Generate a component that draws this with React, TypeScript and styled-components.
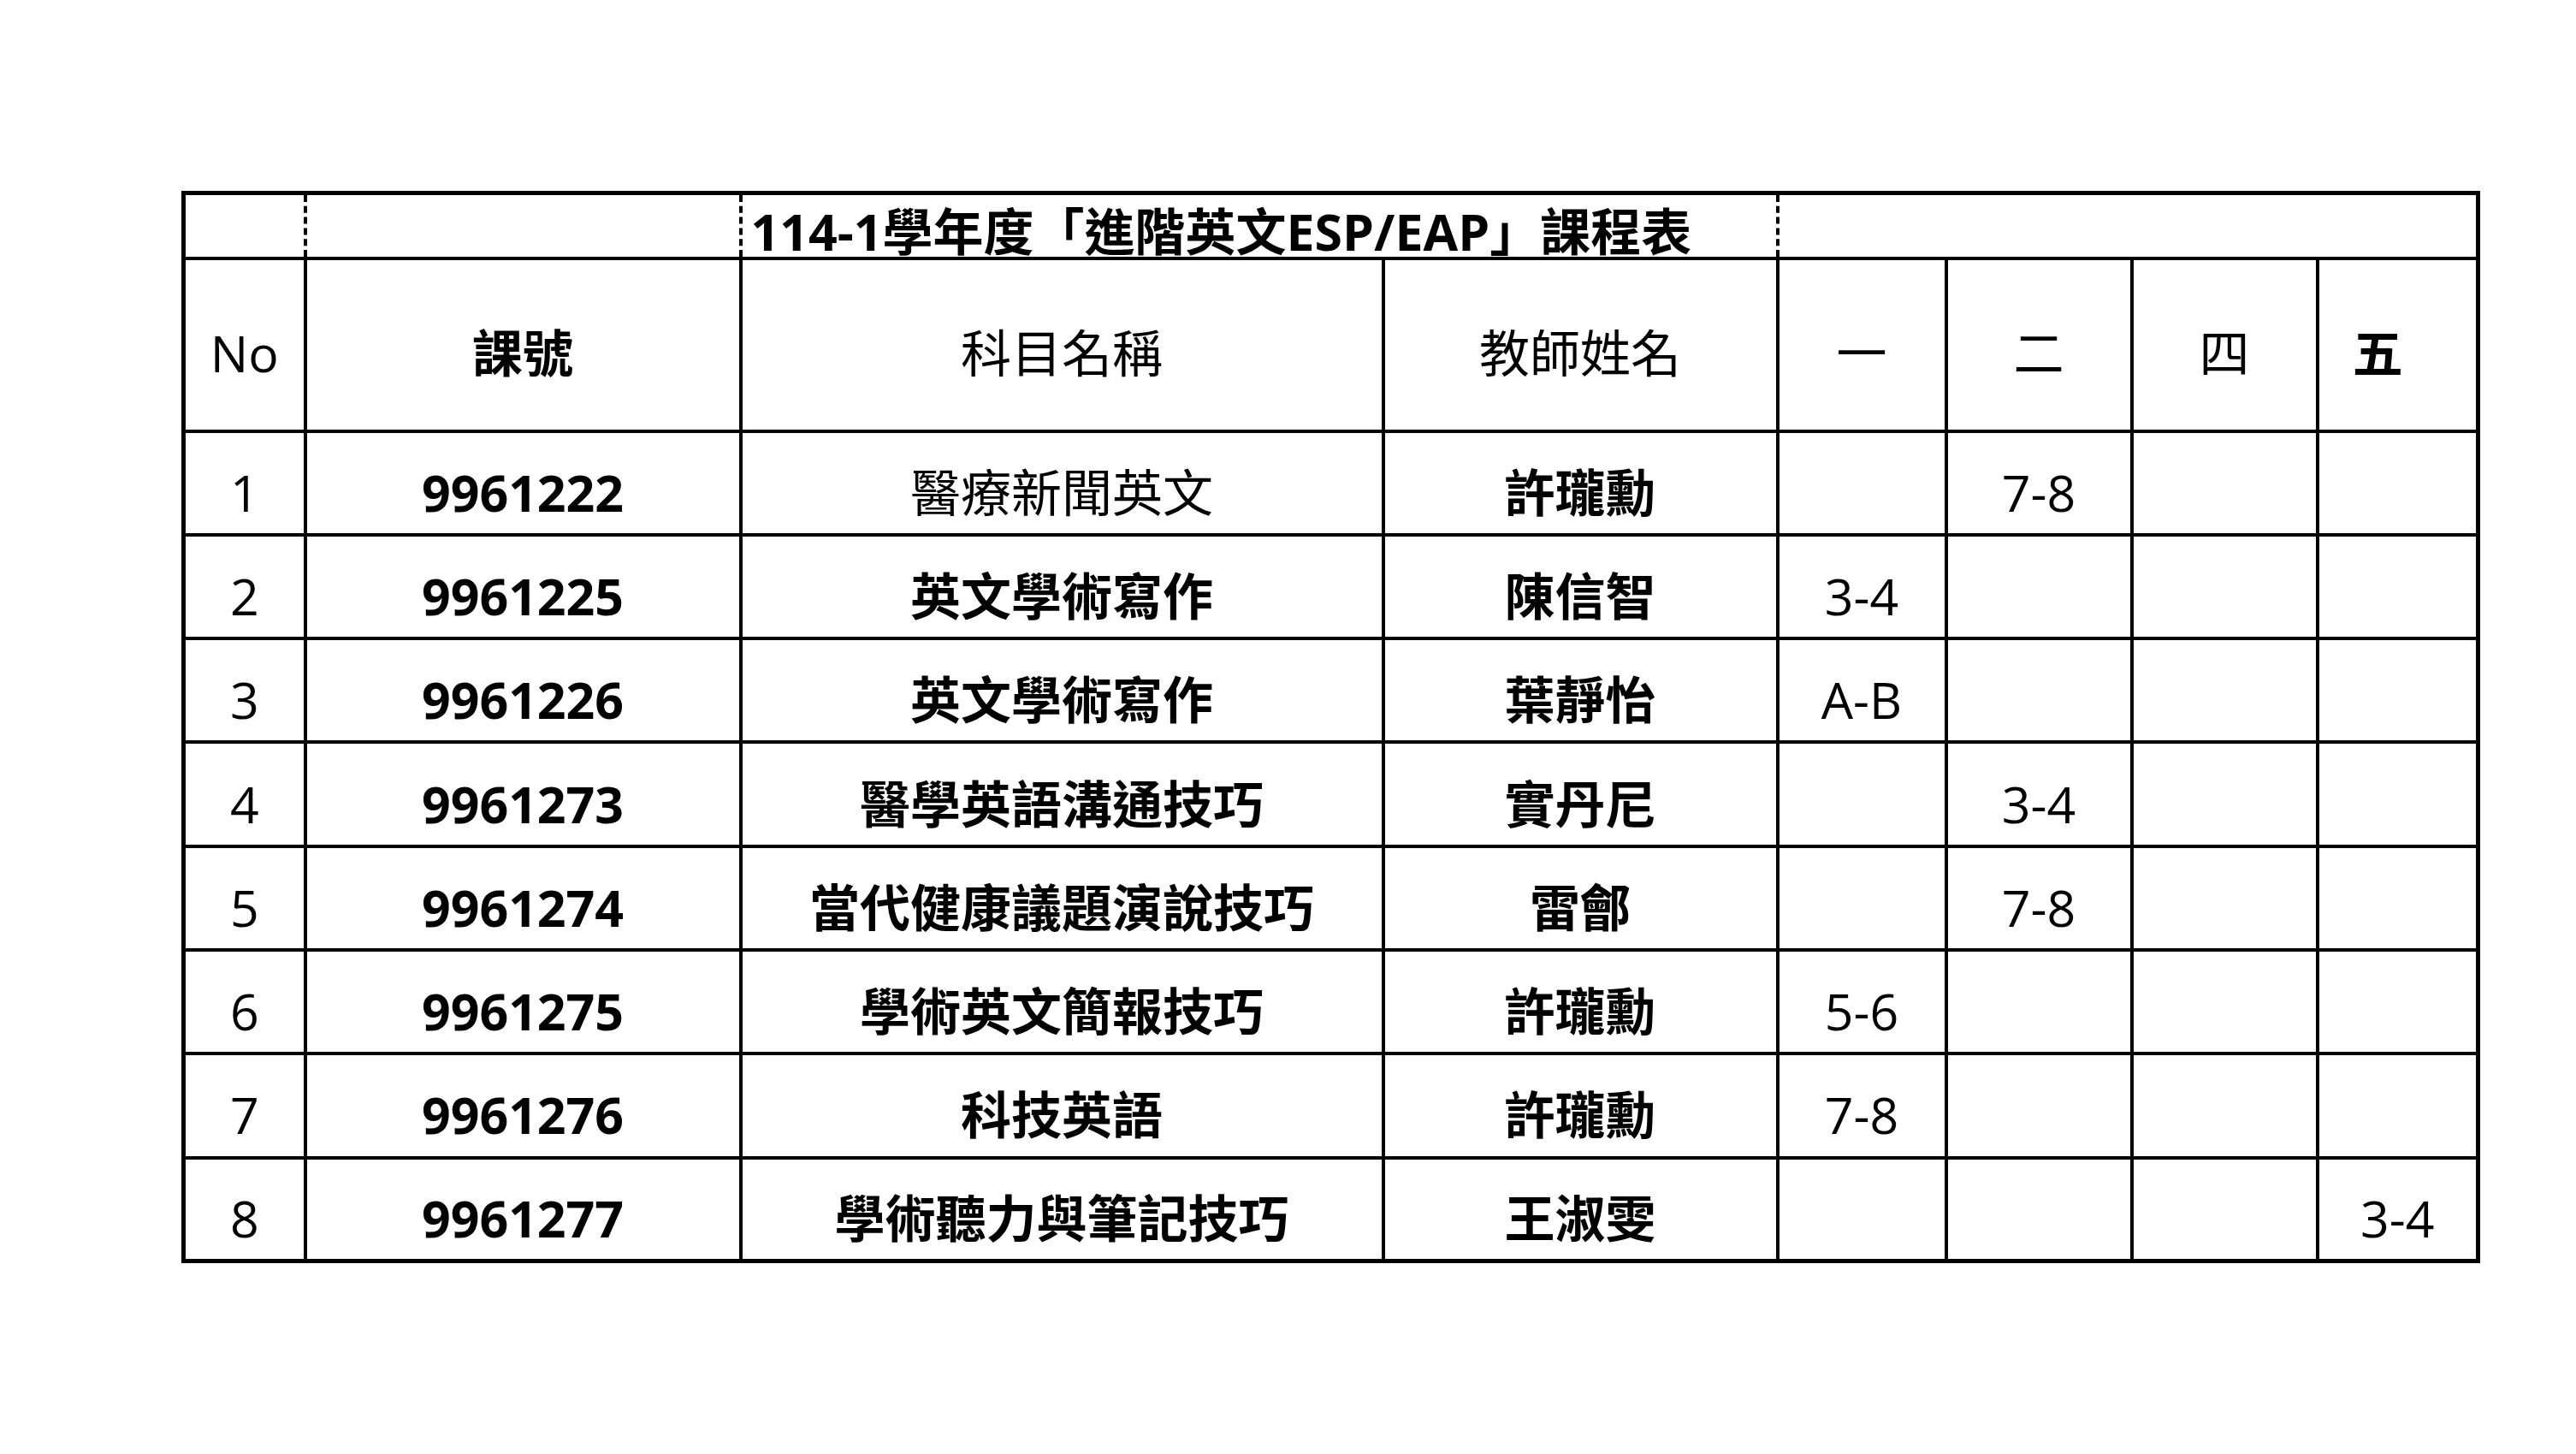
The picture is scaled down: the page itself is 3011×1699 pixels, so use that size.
import React from "react";
import styled, { createGlobalStyle } from "styled-components";

const Global = createGlobalStyle`
  html, body {
    margin: 0;
    padding: 0;
    background: #ffffff;
  }
  body {
    font-family: "Open Sans", "Noto Sans CJK TC", "Noto Sans CJK SC", sans-serif;
    color: #000;
  }
`;

const Page = styled.div`
  padding: 223px 0 0 212px;
  min-height: 1699px;
  box-sizing: border-box;
`;

const Sheet = styled.table`
  border-collapse: collapse;
  table-layout: fixed;
  width: 2682px;
  border: 5px solid #000;
  border-top-width: 5px;
  font-size: 59px;
  line-height: 1;
`;

const TitleRow = styled.tr`
  height: 76px;
`;

const BlankTitleCell = styled.td`
  border-left: 4px dashed #000;
  border-right: 4px dashed #000;
  border-bottom: 4px solid #000;
  padding: 0;
`;

const TitleCell = styled.td`
  border-left: 4px dashed #000;
  border-right: 4px dashed #000;
  border-bottom: 4px solid #000;
  padding: 0 0 0 10px;
  text-align: left;
  vertical-align: bottom;
  font-weight: 700;
  white-space: nowrap;
  overflow: visible;
`;

const HeadRow = styled.tr`
  height: 202px;
`;

const HeadCell = styled.th<{ $bold?: boolean; $pr?: number }>`
  border: 4px solid #000;
  padding: 20px ${(p) => p.$pr ?? 0}px 0 0;
  text-align: center;
  vertical-align: middle;
  font-weight: ${(p) => (p.$bold ? 700 : 400)};
  white-space: nowrap;
`;

const DataRow = styled.tr`
  height: 121.3px;
`;

const Cell = styled.td<{ $bold?: boolean }>`
  border: 4px solid #000;
  padding: 22px 0 0 0;
  text-align: center;
  vertical-align: middle;
  font-weight: ${(p) => (p.$bold ? 700 : 400)};
  white-space: nowrap;
`;

type Course = {
  no: number;
  code: string;
  name: string;
  nameBold: boolean;
  teacher: string;
  slots: [string, string, string, string];
};

const courses: Course[] = [
  { no: 1, code: "9961222", name: "醫療新聞英文", nameBold: false, teacher: "許瓏勳", slots: ["", "7-8", "", ""] },
  { no: 2, code: "9961225", name: "英文學術寫作", nameBold: true, teacher: "陳信智", slots: ["3-4", "", "", ""] },
  { no: 3, code: "9961226", name: "英文學術寫作", nameBold: true, teacher: "葉靜怡", slots: ["A-B", "", "", ""] },
  { no: 4, code: "9961273", name: "醫學英語溝通技巧", nameBold: true, teacher: "實丹尼", slots: ["", "3-4", "", ""] },
  { no: 5, code: "9961274", name: "當代健康議題演說技巧", nameBold: true, teacher: "雷鄶", slots: ["", "7-8", "", ""] },
  { no: 6, code: "9961275", name: "學術英文簡報技巧", nameBold: true, teacher: "許瓏勳", slots: ["5-6", "", "", ""] },
  { no: 7, code: "9961276", name: "科技英語", nameBold: true, teacher: "許瓏勳", slots: ["7-8", "", "", ""] },
  { no: 8, code: "9961277", name: "學術聽力與筆記技巧", nameBold: true, teacher: "王淑雯", slots: ["", "", "", "3-4"] },
];

const widths = [142, 509, 751, 461, 197, 217, 217, 188];

export default function App() {
  return (
    <>
      <Global />
      <Page>
        <Sheet>
          <colgroup>
            {widths.map((w, i) => (
              <col key={i} style={{ width: w }} />
            ))}
          </colgroup>
          <tbody>
            <TitleRow>
              <BlankTitleCell />
              <BlankTitleCell />
              <TitleCell colSpan={2}>114-1學年度「進階英文ESP/EAP」課程表</TitleCell>
              <BlankTitleCell colSpan={4} />
            </TitleRow>
            <HeadRow>
              <HeadCell>No</HeadCell>
              <HeadCell $bold>課號</HeadCell>
              <HeadCell>科目名稱</HeadCell>
              <HeadCell>教師姓名</HeadCell>
              <HeadCell>一</HeadCell>
              <HeadCell>二</HeadCell>
              <HeadCell>四</HeadCell>
              <HeadCell $bold $pr={46}>五</HeadCell>
            </HeadRow>
            {courses.map((c) => (
              <DataRow key={c.no}>
                <Cell>{c.no}</Cell>
                <Cell $bold>{c.code}</Cell>
                <Cell $bold={c.nameBold}>{c.name}</Cell>
                <Cell $bold>{c.teacher}</Cell>
                {c.slots.map((s, i) => (
                  <Cell key={i}>{s}</Cell>
                ))}
              </DataRow>
            ))}
          </tbody>
        </Sheet>
      </Page>
    </>
  );
}
